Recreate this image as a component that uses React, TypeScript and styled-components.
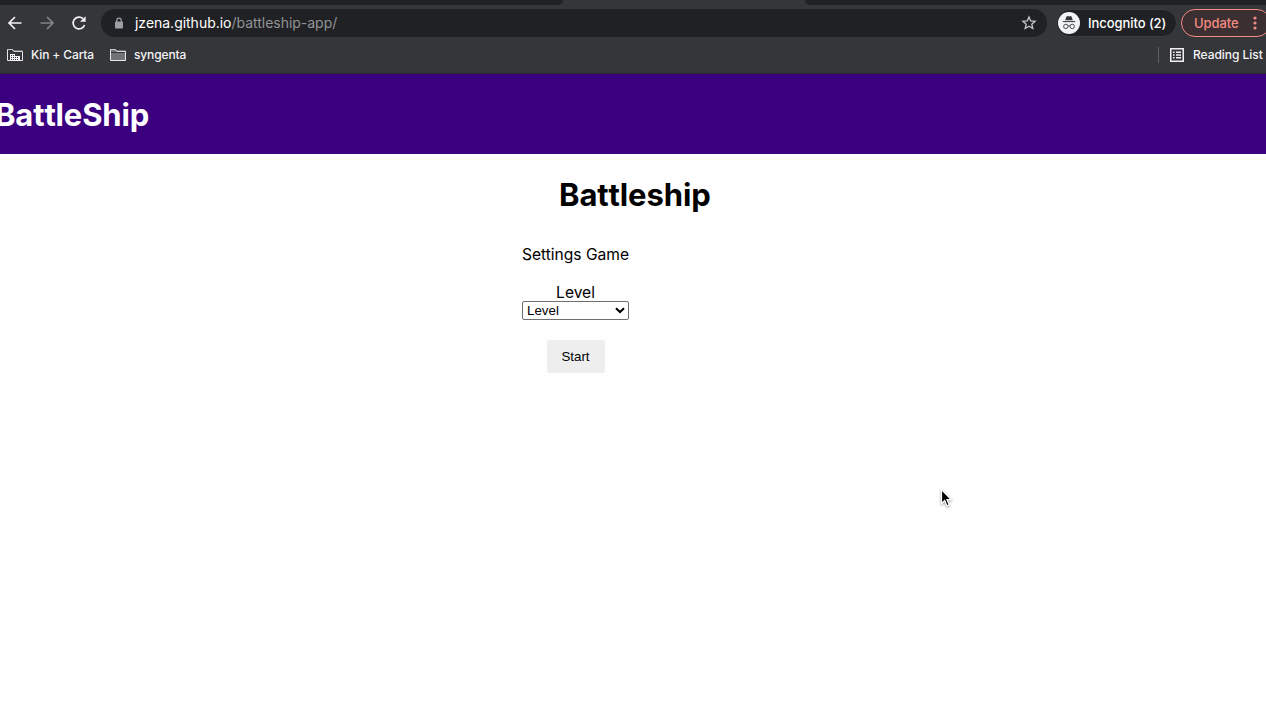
import React from "react";
import styled, { createGlobalStyle } from "styled-components";

const GlobalStyle = createGlobalStyle`
  * { box-sizing: border-box; }
  html, body { margin: 0; padding: 0; overflow: hidden; background: #fefefe; }
  body { font-family: Inter, "Liberation Sans", sans-serif; }
`;

const Window = styled.div`
  width: 1266px;
  height: 709px;
  overflow: hidden;
  display: flex;
  flex-direction: column;
  background: #fefefe;
`;

const TabStrip = styled.div`
  height: 5px;
  flex: none;
  display: flex;
  justify-content: space-between;
  background: #35363a;
`;

const InactiveTabs = styled.div<{ $width: number; $side: "left" | "right" }>`
  width: ${(p) => p.$width}px;
  background: #202124;
  border-radius: ${(p) => (p.$side === "left" ? "0 0 6px 0" : "0 0 0 6px")};
`;

const Toolbar = styled.div`
  height: 36px;
  flex: none;
  display: flex;
  align-items: center;
  background: #35363a;
  padding-left: 7px;
`;

const NavButtons = styled.div`
  display: flex;
  gap: 16px;
  width: 94px;
  flex: none;
  svg { display: block; flex: none; }
`;

const AddressBar = styled.div`
  width: 946px;
  height: 28px;
  flex: none;
  display: flex;
  align-items: center;
  padding: 0 10px 0 13px;
  border-radius: 14px;
  background: #202124;
`;

const Url = styled.div`
  flex: 1;
  padding-left: 11px;
  font-size: 14px;
  line-height: 20px;
  letter-spacing: -0.02px;
  color: #929395;
`;

const Host = styled.span`
  color: #fff;
`;

const Profile = styled.div`
  width: 121px;
  height: 28px;
  flex: none;
  margin-left: 9px;
  padding-left: 1px;
  display: flex;
  align-items: center;
  gap: 8px;
  border: 1px solid #3b3c40;
  border-radius: 14px;
  background: #202124;
  color: #fff;
  font-size: 13px;
  font-weight: 500;
  letter-spacing: -0.06px;
  white-space: nowrap;
`;

const Update = styled.div`
  width: 90px;
  height: 28px;
  flex: none;
  margin-left: 4px;
  padding-left: 12px;
  display: flex;
  align-items: center;
  border: 1px solid #f28b82;
  border-radius: 14px;
  background: #3b2f32;
  color: #f28b82;
  font-size: 13px;
  font-weight: 500;
  letter-spacing: -0.08px;
  svg { margin-left: 14.5px; }
`;

const Bookmarks = styled.div`
  height: 33px;
  flex: none;
  display: flex;
  align-items: center;
  padding: 0 0 5px 7px;
  background: #35363a;
  border-bottom: 1px solid #29282c;
  color: #f4f4f5;
`;

const Bookmark = styled.div<{ $width?: number }>`
  display: flex;
  align-items: center;
  gap: 8px;
  width: ${(p) => (p.$width ? `${p.$width}px` : "auto")};
  flex: none;
  font-size: 12px;
  font-weight: 500;
  letter-spacing: -0.13px;
  white-space: nowrap;
`;

const Divider = styled.div`
  width: 1px;
  height: 16px;
  margin: 0 11px 0 auto;
  background: #5f6064;
`;

const ReadingList = styled(Bookmark)`
  width: 96px;
  gap: 9px;
  letter-spacing: -0.04px;
`;

const Banner = styled.header`
  height: 80px;
  flex: none;
  display: flex;
  align-items: center;
  padding-top: 2px;
  background: #3b007f;
  color: #fff;
`;

const Title = styled.h1<{ $track: number }>`
  margin: 0;
  font-size: 31px;
  line-height: 38px;
  font-weight: 700;
  letter-spacing: ${(p) => p.$track}px;
  font-variant-ligatures: none;
  font-kerning: none;
  white-space: nowrap;
`;

const BrandTitle = styled(Title)`
  margin-left: -5px;
`;

const Main = styled.main`
  flex: 1;
  display: flex;
  flex-direction: column;
  padding-top: 22px;
`;

const PageTitle = styled(Title)`
  padding-left: 559px;
`;

const Settings = styled.section`
  width: 107px;
  margin: 31px 0 0 522px;
  display: flex;
  flex-direction: column;
  align-items: center;
  color: #000;
`;

const Label = styled.div<{ $gap: number }>`
  font-size: 15.6px;
  line-height: 19px;
  letter-spacing: -0.02px;
  margin-bottom: ${(p) => p.$gap}px;
  white-space: nowrap;
`;

const Select = styled.div`
  width: 107px;
  height: 19px;
  display: flex;
  align-items: center;
  justify-content: space-between;
  padding: 0 3px 0 4px;
  border: 1px solid #6f6f6f;
  border-radius: 2px;
  background: #fff;
  font: 13.33px "Liberation Sans", Arial, sans-serif;
`;

const Start = styled.button`
  width: 58px;
  height: 33px;
  margin-top: 20px;
  padding: 0;
  border: 0;
  border-radius: 3px;
  background: #eee;
  color: #000;
  font: 13.33px "Liberation Sans", Arial, sans-serif;
`;

const Pointer = styled.svg`
  position: absolute;
  left: 938px;
  top: 487px;
`;

const PointerShape = styled.path`
  filter: drop-shadow(0 1px 1px rgba(0, 0, 0, 0.4));
`;

const Back = () => (
  <svg width="16" height="16" viewBox="0 0 16 16" fill="none" stroke="#f1f1f2" strokeWidth="1.7">
    <path d="M14.5 8H2.2M8 2L2 8l6 6" />
  </svg>
);

const Forward = () => (
  <svg width="16" height="16" viewBox="0 0 16 16" fill="none" stroke="#828386" strokeWidth="1.7">
    <path d="M1.5 8h12.3M8 2l6 6-6 6" />
  </svg>
);

const Reload = () => (
  <svg width="16" height="16" viewBox="0 0 16 16">
    <path d="M13.6 10a5.9 5.9 0 1 1-1.5-6.3" fill="none" stroke="#f1f1f2" strokeWidth="1.7" />
    <path d="M14.6 1.2v5.6H9z" fill="#f1f1f2" />
  </svg>
);

const Lock = () => (
  <svg width="10" height="13" viewBox="0 0 10 13">
    <path d="M2.7 5V3.4a2.3 2.3 0 0 1 4.6 0V5" fill="none" stroke="#9aa0a6" strokeWidth="1.2" />
    <rect x="1" y="4.6" width="8" height="7" rx="1" fill="#9aa0a6" />
  </svg>
);

const Star = () => (
  <svg width="16" height="16" viewBox="0 0 16 16" fill="none" stroke="#c6c7c9" strokeWidth="1.3">
    <path d="M8 1.9l1.7 4 4.4.4-3.3 2.9 1 4.3L8 11.2l-3.8 2.3 1-4.3-3.3-2.9 4.4-.4z" />
  </svg>
);

const IncognitoIcon = () => (
  <svg width="22" height="22" viewBox="0 0 22 22">
    <circle cx="11" cy="11" r="11" fill="#f1f3f4" />
    <path d="M7.2 8.2l1.3-3.8 1-.4 1.5.5 1.5-.5 1 .4 1.3 3.8z" fill="#35363a" />
    <path d="M4.8 9.6h12.4" stroke="#35363a" strokeWidth="1" />
    <g fill="none" stroke="#4a4b4f" strokeWidth="1">
      <circle cx="7.8" cy="14.4" r="2.2" />
      <circle cx="14.2" cy="14.4" r="2.2" />
      <path d="M10 14.1q1-.7 2 0" />
    </g>
  </svg>
);

const Dots = () => (
  <svg width="4" height="14" viewBox="0 0 4 14" fill="#f28b82">
    <circle cx="2" cy="2" r="1.6" />
    <circle cx="2" cy="7" r="1.6" />
    <circle cx="2" cy="12" r="1.6" />
  </svg>
);

const Folder = ({ managed = false }: { managed?: boolean }) => (
  <svg width="16" height="14" viewBox="0 0 16 14">
    <path d="M.5 12.5V1.5h5l1.5 2h8.5v9z" fill={managed ? "#35363a" : "#717275"} stroke="#e8e8e9" />
    <path d="M1 1.5h4.5l1.2 1.6h8.8" fill="none" stroke="#c8c8ca" />
    {!managed && <path d="M1 4.5h14" stroke="#35363a" />}
    {managed && (
      <path
        d="M3 6h5v2h5v5H3zM4 7v1h1V7zM6 7v1h1V7zM4 9v1h1V9zM6 9v1h1V9zM4 11v1h1v-1zM6 11v1h1v-1zM8 9v1h1V9zM10 9v1h1V9zM8 11v1h1v-1zM10 11v1h1v-1z"
        fill="#f4f4f5"
        fillRule="evenodd"
      />
    )}
  </svg>
);

const ListIcon = () => (
  <svg width="14" height="14" viewBox="0 0 14 14">
    <rect x=".75" y=".75" width="12.5" height="12.5" fill="none" stroke="#f1f1f2" strokeWidth="1.5" />
    <path d="M3 4.2h1.6M3 7h1.6M3 9.8h1.6M6 4.2h5M6 7h5M6 9.8h5" stroke="#f1f1f2" strokeWidth="1.4" />
  </svg>
);

const Chevron = () => (
  <svg width="10" height="7" viewBox="0 0 10 7">
    <path d="M1 1.3l4 3.8 4-3.8" fill="none" stroke="#000" strokeWidth="2.1" />
  </svg>
);

export default function App() {
  return (
    <>
      <GlobalStyle />
      <Window>
        <TabStrip>
          <InactiveTabs $width={563} $side="left" />
          <InactiveTabs $width={461} $side="right" />
        </TabStrip>
        <Toolbar>
          <NavButtons>
            <Back />
            <Forward />
            <Reload />
          </NavButtons>
          <AddressBar>
            <Lock />
            <Url>
              <Host>jzena.github.io</Host>/battleship-app/
            </Url>
            <Star />
          </AddressBar>
          <Profile>
            <IncognitoIcon />
            Incognito (2)
          </Profile>
          <Update>
            Update
            <Dots />
          </Update>
        </Toolbar>
        <Bookmarks>
          <Bookmark $width={103}>
            <Folder managed />
            Kin + Carta
          </Bookmark>
          <Bookmark>
            <Folder />
            syngenta
          </Bookmark>
          <Divider />
          <ReadingList>
            <ListIcon />
            Reading List
          </ReadingList>
        </Bookmarks>
        <Banner>
          <BrandTitle $track={-0.15}>BattleShip</BrandTitle>
        </Banner>
        <Main>
          <PageTitle $track={-0.1}>Battleship</PageTitle>
          <Settings>
            <Label $gap={19}>Settings Game</Label>
            <Label $gap={-1}>Level</Label>
            <Select>
              Level
              <Chevron />
            </Select>
            <Start>Start</Start>
          </Settings>
        </Main>
        <Pointer width="16" height="22" viewBox="0 0 16 22">
          <PointerShape d="M3.5 2.5v14l3.2-3 2.2 5.2 2.3-1-2.2-5h4.2z" fill="#000" stroke="#fff" strokeWidth="1.2" />
        </Pointer>
      </Window>
    </>
  );
}
